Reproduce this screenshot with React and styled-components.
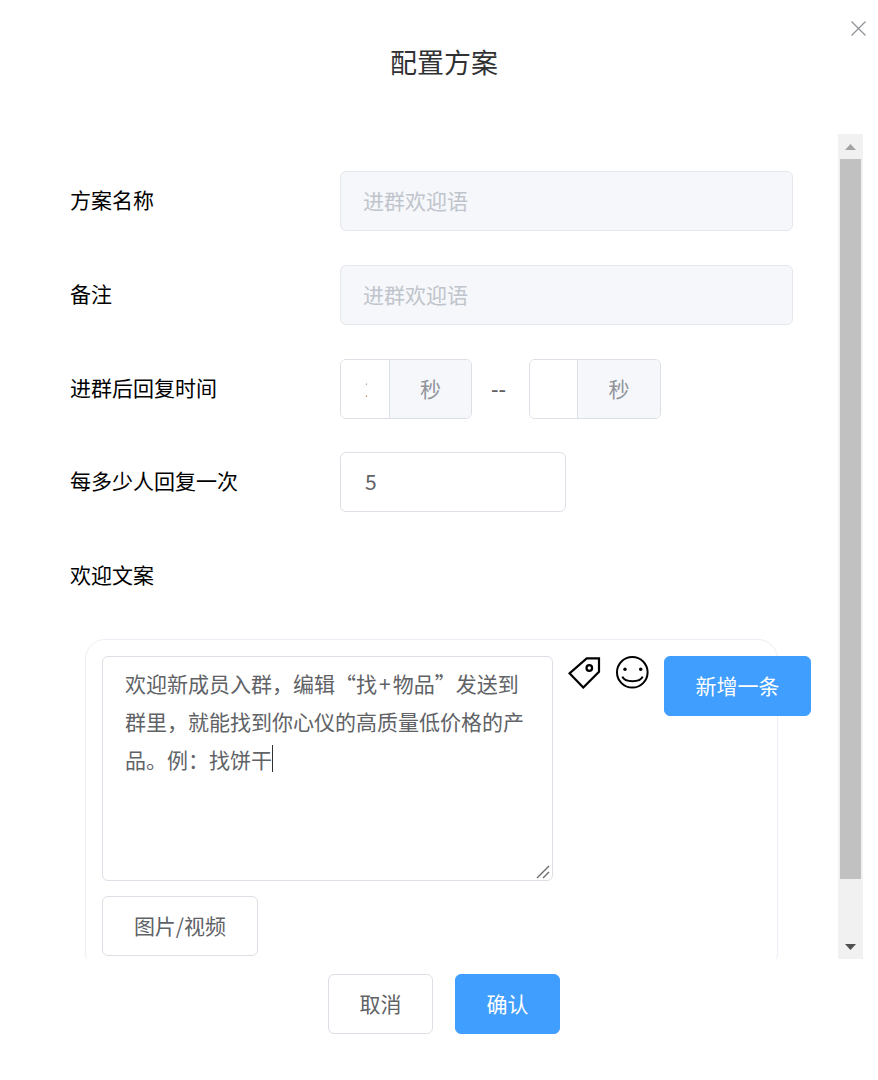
import React from 'react';
import styled, { createGlobalStyle } from 'styled-components';

const GlobalStyle = createGlobalStyle`
  html, body {
    margin: 0;
    background: #fff;
    overflow: hidden;
  }
  * {
    box-sizing: border-box;
  }
  body {
    font-family: "Noto Sans CJK SC", "Open Sans", sans-serif;
    font-size: 21px;
    color: #606266;
  }
`;

const Dialog = styled.div`
  position: relative;
  width: 878px;
  height: 1080px;
  display: flex;
  flex-direction: column;
`;

const CloseButton = styled.button`
  position: absolute;
  top: 20px;
  right: 11px;
  width: 17px;
  height: 17px;
  padding: 0;
  border: none;
  background: none;
  display: block;
`;

const Header = styled.div`
  height: 134px;
  padding: 40px 0 0 10px;
  text-align: center;
`;

const Title = styled.h2`
  margin: 0;
  font-size: 27px;
  line-height: 44px;
  font-weight: 400;
  color: #303133;
`;

const ScrollArea = styled.div`
  height: 825px;
  display: flex;
`;

const Content = styled.div`
  width: 838px;
  height: 825px;
  padding-top: 37.4px;
  overflow: hidden;
  display: flex;
  flex-direction: column;
  flex-shrink: 0;
  gap: 33.6px;
`;

const Scrollbar = styled.div`
  width: 25px;
  height: 825px;
  background: #f1f1f1;
  display: flex;
  flex-direction: column;
  align-items: center;
  flex-shrink: 0;
`;

const ArrowBox = styled.div`
  height: 25px;
  width: 25px;
  display: flex;
  align-items: center;
  justify-content: center;
`;

const ScrollThumb = styled.div`
  width: 21px;
  height: 720px;
  background: #c1c1c1;
  flex-shrink: 0;
  margin-bottom: 55px;
`;

const Row = styled.div`
  display: flex;
  align-items: center;
  height: 60px;
  flex-shrink: 0;
  padding-left: 70px;
`;

const Label = styled.label`
  width: 270px;
  flex-shrink: 0;
  color: #000;
  font-size: 21px;
  line-height: 30px;
  margin-top: -4px;
`;

const TextBox = styled.div`
  width: ${(p) => p.$width}px;
  height: 60px;
  display: flex;
  align-items: center;
  padding: 0 0 2px ${(p) => (p.$disabled ? 22 : 24)}px;
  border: 1px solid #dcdfe6;
  border-radius: 6px;
  font-size: 21px;
  background: ${(p) => (p.$disabled ? '#f5f7fa' : '#fff')};
  border-color: ${(p) => (p.$disabled ? '#e4e7ed' : '#dcdfe6')};
  color: ${(p) => (p.$disabled ? '#c0c4cc' : '#606266')};
`;

const SecondsGroup = styled.div`
  width: 132px;
  height: 60px;
  display: flex;
  border: 1px solid #dcdfe6;
  border-radius: 6px;
  overflow: hidden;
`;

const SecondsInput = styled.div`
  width: ${(p) => p.$width}px;
  flex-shrink: 0;
  padding: 0 0 2px 24px;
  display: flex;
  align-items: center;
  background: #fff;
`;

const ClippedValue = styled.span`
  display: block;
  width: 2px;
  overflow: hidden;
  line-height: 30px;
  color: #909399;
  opacity: 0.99;
`;

const SecondsUnit = styled.div`
  flex: 1;
  display: flex;
  align-items: center;
  justify-content: center;
  padding-bottom: 2px;
  background: #f5f7fa;
  border-left: 1px solid #dcdfe6;
  color: #909399;
`;

const RangeDash = styled.span`
  width: 57px;
  padding: 0 0 2px 19px;
  color: #606266;
  font-size: 21px;
  font-weight: 500;
`;

const Card = styled.div`
  position: relative;
  width: 693px;
  margin-left: 85px;
  padding: 16px;
  border: 1px solid #ebeef5;
  border-radius: 20px;
  flex-shrink: 0;
`;

const EditorRow = styled.div`
  display: flex;
  align-items: flex-start;
`;

const Editor = styled.div`
  position: relative;
  width: 451px;
  height: 225px;
  flex-shrink: 0;
  padding: 8px 22px;
  border: 1px solid #dcdfe6;
  border-radius: 6px;
  font-size: 21px;
  line-height: 37.6px;
  color: #606266;
`;

const Plus = styled.span`
  margin: 0 2px;
`;

const Caret = styled.span`
  display: inline-block;
  width: 1px;
  height: 27px;
  margin-bottom: -4px;
  background: #303133;
`;

const ResizeHandle = styled.svg`
  position: absolute;
  right: 1px;
  bottom: 1px;
  display: block;
`;

const IconSlot = styled.div`
  width: 33px;
  height: 33px;
  margin-left: ${(p) => p.$offset}px;
  flex-shrink: 0;
`;

const Button = styled.button`
  height: 60px;
  width: ${(p) => p.$width}px;
  padding: 0 0 2px;
  border: 1px solid ${(p) => (p.$primary ? '#409eff' : '#dcdfe6')};
  border-radius: 6px;
  background: ${(p) => (p.$primary ? '#409eff' : '#fff')};
  color: ${(p) => (p.$primary ? '#fff' : '#606266')};
  font-family: inherit;
  font-size: 21px;
  flex-shrink: 0;
`;

const AddButton = styled(Button)`
  margin-left: 15px;
`;

const MediaButton = styled(Button)`
  display: block;
  margin-top: 15px;
`;

const Footer = styled.div`
  padding: 15px 0 0 10px;
  display: flex;
  justify-content: center;
  gap: 22px;
`;

const TagIcon = () => (
  <svg width="33" height="33" viewBox="0 0 33 33" fill="none" stroke="#000" strokeWidth="2.2" strokeLinejoin="miter">
    <path d="M1.5 17.3 L15.3 31.5 L31 15.7 L31 2.4 L18.7 2.4 Z" />
    <circle cx="21.3" cy="12" r="2.8" />
  </svg>
);

const SmileIcon = () => (
  <svg width="33" height="33" viewBox="0 0 33 33" fill="none" stroke="#000" strokeWidth="2">
    <circle cx="16.3" cy="16.3" r="15.3" />
    <circle cx="9" cy="13.3" r="1.7" fill="#000" stroke="none" />
    <circle cx="24.7" cy="13.3" r="1.7" fill="#000" stroke="none" />
    <path d="M6.3 20.7 C9 26.8 24 26.8 26.7 20.7" />
  </svg>
);

const CloseIcon = () => (
  <svg width="17" height="17" viewBox="0 0 17 17" fill="none" stroke="#909399" strokeWidth="1.3">
    <path d="M1.5 1.5 L15.5 15.5 M15.5 1.5 L1.5 15.5" />
  </svg>
);

const ArrowUp = () => (
  <svg width="11" height="6" viewBox="0 0 11 6">
    <path d="M5.5 0 L11 6 L0 6 Z" fill="#a3a3a3" />
  </svg>
);

const ArrowDown = () => (
  <svg width="11" height="6" viewBox="0 0 11 6">
    <path d="M0 0 L11 0 L5.5 6 Z" fill="#505050" />
  </svg>
);

const App = () => {
  return (
    <Dialog>
      <GlobalStyle />
      <CloseButton aria-label="关闭">
        <CloseIcon />
      </CloseButton>
      <Header>
        <Title>配置方案</Title>
      </Header>
      <ScrollArea>
        <Content>
          <Row>
            <Label>方案名称</Label>
            <TextBox $width={453} $disabled>进群欢迎语</TextBox>
          </Row>
          <Row>
            <Label>备注</Label>
            <TextBox $width={453} $disabled>进群欢迎语</TextBox>
          </Row>
          <Row>
            <Label>进群后回复时间</Label>
            <SecondsGroup>
              <SecondsInput $width={48}>
                <ClippedValue>2</ClippedValue>
              </SecondsInput>
              <SecondsUnit>秒</SecondsUnit>
            </SecondsGroup>
            <RangeDash>--</RangeDash>
            <SecondsGroup>
              <SecondsInput $width={47} />
              <SecondsUnit>秒</SecondsUnit>
            </SecondsGroup>
          </Row>
          <Row>
            <Label>每多少人回复一次</Label>
            <TextBox $width={226}>5</TextBox>
          </Row>
          <Row>
            <Label>欢迎文案</Label>
          </Row>
          <Card>
            <EditorRow>
              <Editor>
                欢迎新成员入群，编辑“找<Plus>+</Plus>物品”发送到<br />
                群里，就能找到你心仪的高质量低价格的产品。例：找饼干<Caret />
                <ResizeHandle width="15" height="15" viewBox="0 0 15 15" fill="none" stroke="#6b6b6b" strokeWidth="1.4">
                  <path d="M1 14 L13 2 M7 14 L13 8" />
                </ResizeHandle>
              </Editor>
              <IconSlot $offset={15}>
                <TagIcon />
              </IconSlot>
              <IconSlot $offset={15}>
                <SmileIcon />
              </IconSlot>
              <AddButton $primary $width={147}>新增一条</AddButton>
            </EditorRow>
            <MediaButton $width={156}>图片/视频</MediaButton>
          </Card>
        </Content>
        <Scrollbar>
          <ArrowBox>
            <ArrowUp />
          </ArrowBox>
          <ScrollThumb />
          <ArrowBox>
            <ArrowDown />
          </ArrowBox>
        </Scrollbar>
      </ScrollArea>
      <Footer>
        <Button $width={105}>取消</Button>
        <Button $primary $width={105}>确认</Button>
      </Footer>
    </Dialog>
  );
};

export default App;
